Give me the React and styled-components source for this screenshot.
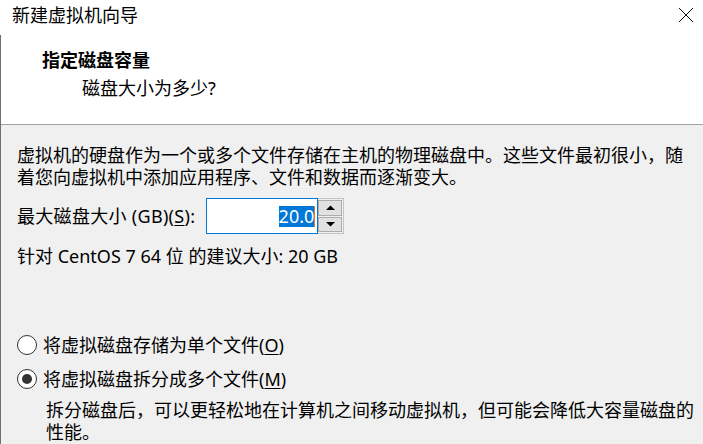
import React from 'react'
import styled, { createGlobalStyle } from 'styled-components'

const GlobalStyle = createGlobalStyle`
  html, body {
    margin: 0;
    padding: 0;
    background: #ffffff;
  }
  body {
    font-family: "Noto Sans", "Noto Sans CJK SC", sans-serif;
    color: #000;
  }
`

const CloseIcon = () => (
  <svg width="16" height="16" viewBox="0 0 16 16">
    <path d="M1 1 L15 15 M15 1 L1 15" stroke="#111" strokeWidth="1" fill="none" />
  </svg>
)

const Arrow = ({ dir }) => (
  <svg width="9" height="5" viewBox="0 0 9 5">
    <path d={dir === 'up' ? 'M0 5 L4.5 0.5 L9 5 Z' : 'M0 0 L4.5 4.5 L9 0 Z'} fill="#000" />
  </svg>
)

const Radio = ({ checked, children }) => (
  <OptionRow>
    <Circle>{checked && <Dot />}</Circle>
    <OptionLabel>{children}</OptionLabel>
  </OptionRow>
)

const App = () => (
  <Window>
    <GlobalStyle />
    <TitleBar>
      <Title>新建虚拟机向导</Title>
      <CloseButton>
        <CloseIcon />
      </CloseButton>
    </TitleBar>
    <Frame>
      <Header>
        <HeadTitle>指定磁盘容量</HeadTitle>
        <HeadSub>磁盘大小为多少?</HeadSub>
      </Header>
      <Body>
        <Paragraph>
          虚拟机的硬盘作为一个或多个文件存储在主机的物理磁盘中。这些文件最初很小，随着您向虚拟机中添加应用程序、文件和数据而逐渐变大。
        </Paragraph>
        <SizeRow>
          <Label>
            最大磁盘大小 (GB)(<Mnemonic>S</Mnemonic>):
          </Label>
          <SpinBox>
            <Field>
              <Selected>20.0</Selected>
              <Caret />
            </Field>
            <Spinner>
              <SpinButton>
                <Arrow dir="up" />
              </SpinButton>
              <SpinButton>
                <Arrow dir="down" />
              </SpinButton>
            </Spinner>
          </SpinBox>
        </SizeRow>
        <Recommend>针对 CentOS 7 64 位 的建议大小: 20 GB</Recommend>
        <Options>
          <Radio>
            将虚拟磁盘存储为单个文件(<Mnemonic>O</Mnemonic>)
          </Radio>
          <Radio checked>
            将虚拟磁盘拆分成多个文件(<Mnemonic>M</Mnemonic>)
          </Radio>
        </Options>
        <Description>
          拆分磁盘后，可以更轻松地在计算机之间移动虚拟机，但可能会降低大容量磁盘的性能。
        </Description>
      </Body>
    </Frame>
  </Window>
)

export default App

const Window = styled.div`
  width: 703px;
  height: 444px;
  overflow: hidden;
  display: flex;
  flex-direction: column;
  background: #ffffff;
  font-size: 18px;
`

const TitleBar = styled.div`
  height: 35px;
  flex: none;
  display: flex;
  align-items: center;
  justify-content: space-between;
  padding: 0 9px 6px 12px;
  box-sizing: border-box;
  background: #ffffff;
`

const Title = styled.div`
  font-size: 18px;
  line-height: 22px;
`

const CloseButton = styled.div`
  display: flex;
  align-items: center;
  justify-content: center;
  width: 16px;
  height: 16px;
`

const Frame = styled.div`
  flex: 1;
  display: flex;
  flex-direction: column;
  border-left: 1px solid #6f6f6f;
  min-height: 0;
`

const Header = styled.div`
  height: 90px;
  flex: none;
  box-sizing: border-box;
  padding-top: 14px;
  background: #ffffff;
  border-bottom: 1px solid #a0a0a0;
`

const HeadTitle = styled.div`
  padding-left: 41px;
  font-weight: 700;
  line-height: 22px;
`

const HeadSub = styled.div`
  padding-left: 81px;
  margin-top: 6px;
  line-height: 22px;
`

const Body = styled.div`
  flex: 1;
  background: #f0f0f0;
  padding: 19px 4px 0 16px;
`

const Paragraph = styled.div`
  line-height: 22px;
`

const SizeRow = styled.div`
  display: flex;
  align-items: center;
  gap: 11px;
  margin-top: 10px;
  height: 36px;
`

const Label = styled.div`
  line-height: 22px;
  letter-spacing: 0.3px;
`

const Mnemonic = styled.span`
  text-decoration: underline;
  text-underline-offset: 2px;
`

const SpinBox = styled.div`
  display: flex;
  align-items: stretch;
  height: 36px;
`

const Field = styled.div`
  width: 112px;
  box-sizing: border-box;
  border: 1px solid #0078d7;
  background: #ffffff;
  display: flex;
  align-items: center;
  justify-content: flex-end;
  padding-right: 2px;
`

const Selected = styled.span`
  background: #0078d7;
  color: #ffffff;
  line-height: 21px;
`

const Caret = styled.span`
  width: 1px;
  height: 21px;
  background: #e0791f;
`

const Spinner = styled.div`
  width: 26px;
  display: flex;
  flex-direction: column;
  gap: 1px;
  padding: 1px 1px 1px 0;
  box-sizing: border-box;
  border: 1px solid #c4c4c4;
  border-left: none;
  background: #f0f0f0;
`

const SpinButton = styled.div`
  flex: 1;
  display: flex;
  align-items: center;
  justify-content: center;
  background: #e1e1e1;
  border: 1px solid #adadad;
`

const Recommend = styled.div`
  margin-top: 11px;
  line-height: 22px;
`

const Options = styled.div`
  margin-top: 66px;
  display: flex;
  flex-direction: column;
  gap: 10px;
`

const OptionRow = styled.div`
  display: flex;
  align-items: center;
  gap: 6px;
  height: 24px;
`

const Circle = styled.div`
  width: 20px;
  height: 20px;
  box-sizing: border-box;
  border: 1.5px solid #333333;
  border-radius: 50%;
  background: #ffffff;
  display: flex;
  align-items: center;
  justify-content: center;
`

const Dot = styled.div`
  width: 10px;
  height: 10px;
  border-radius: 50%;
  background: #333333;
`

const OptionLabel = styled.div`
  line-height: 22px;
`

const Description = styled.div`
  margin-top: 8px;
  padding-left: 29px;
  line-height: 22px;
`
